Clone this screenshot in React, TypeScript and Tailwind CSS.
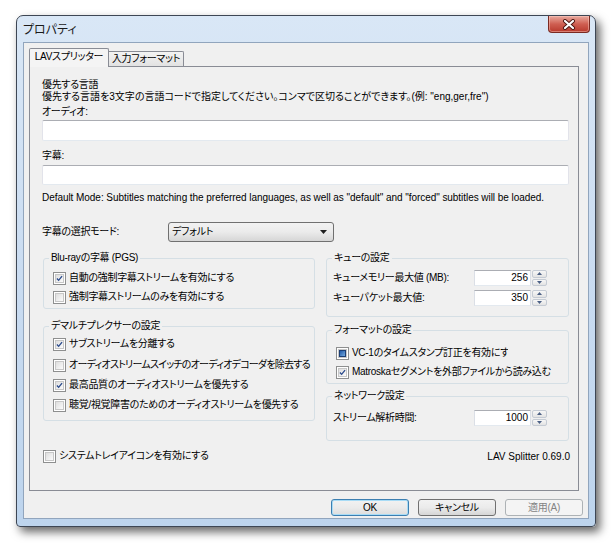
import React from 'react';

type CheckState = 'on' | 'off' | 'mixed';

const CheckBox: React.FC<{ state: CheckState }> = ({ state }) => (
  <span className="flex h-[13px] w-[13px] shrink-0 items-center justify-center border border-[#8e8f8f] bg-white p-[1px]">
    <span className="flex h-full w-full items-center justify-center border border-[#c7c7c7] bg-gradient-to-br from-[#dedede] to-[#fbfbfb]">
      {state === 'on' && (
        <svg width="9" height="9" viewBox="0 0 9 9">
          <path d="M1.2 4.6 L3.4 6.9 L7.8 1.4" fill="none" stroke="#2a4a8c" strokeWidth="1.7" />
        </svg>
      )}
      {state === 'mixed' && <span className="h-[7px] w-[7px] border border-[#1d3f74] bg-gradient-to-br from-[#1f5aa8] to-[#76a9dc]" />}
    </span>
  </span>
);

const CheckRow: React.FC<{ state: CheckState; label: string; className?: string; labelClass?: string }> = ({
  state,
  label,
  className,
  labelClass
}) => (
  <div className={`flex h-[14px] items-center gap-[3px] ${className ?? ''}`}>
    <CheckBox state={state} />
    <span className={`whitespace-nowrap leading-[14px] ${labelClass ?? ''}`}>{label}</span>
  </div>
);

const GroupBox: React.FC<{ title: string; className: string; children?: React.ReactNode }> = ({ title, className, children }) => (
  <div className={`flex flex-col rounded-[3px] border border-[#d5dfe5] ${className}`}>
    <span className="-mt-[7px] ml-[5px] w-fit bg-[#f0f0f0] px-[2px] leading-[12px]">{title}</span>
    {children}
  </div>
);

const SpinBox: React.FC<{ value: string }> = ({ value }) => (
  <div className="flex h-[16px] w-[73px] items-stretch gap-[1px] tracking-normal">
    <div className="flex flex-1 items-center justify-end border border-[#abadb3] border-b-[#e3e9ef] border-x-[#dbdfe6] bg-white pr-[2px] leading-[14px]">
      {value}
    </div>
    <div className="flex w-[15px] flex-col gap-[1px]">
      <div className="flex flex-1 items-center justify-center rounded-[2px] border border-[#c5cbd4] bg-gradient-to-b from-[#f7f7f7] to-[#e3e3e3]">
        <svg width="5" height="3" viewBox="0 0 5 3"><path d="M0 3 L2.5 0 L5 3 Z" fill="#4d6185" /></svg>
      </div>
      <div className="flex flex-1 items-center justify-center rounded-[2px] border border-[#c5cbd4] bg-gradient-to-b from-[#f7f7f7] to-[#e3e3e3]">
        <svg width="5" height="3" viewBox="0 0 5 3"><path d="M0 0 L5 0 L2.5 3 Z" fill="#4d6185" /></svg>
      </div>
    </div>
  </div>
);

const TextBox: React.FC<{ className: string }> = ({ className }) => (
  <div className={`w-[527px] rounded-[2px] border border-[#abadb3] border-x-[#e2e3ea] border-b-[#e3e9ef] bg-white ${className}`} />
);

export default function App() {
  return (
    <div className="h-[548px] w-[614px] overflow-hidden bg-white pl-[16px] pt-[15px] font-['Liberation_Sans','Noto_Sans_CJK_JP',sans-serif] text-[10px] tracking-[-0.3px] text-black [font-feature-settings:'palt']">
      <div className="flex h-[512px] w-[580px] flex-col rounded-t-[7px] rounded-b-[4px] border border-[#3d4654] bg-gradient-to-b from-[#d9e7f6] via-[#cadcf1] to-[#bdd4ed] shadow-[4px_5px_10px_rgba(0,0,0,0.6)]">
        <div className="flex h-[26px] shrink-0 items-start justify-between pl-[6px] pr-[5px]">
          <span className="mt-[7px] text-[12px] leading-[14px] tracking-normal text-[#1a1a1a]">プロパティ</span>
          <div className="flex h-[17px] w-[42px] items-center justify-center rounded-b-[4px] border border-t-0 border-[#7a2a22] bg-gradient-to-b from-[#e8a99f] via-[#cf5f52] to-[#b8382c] shadow-[inset_0_0_0_1px_rgba(255,210,200,0.45)]">
            <svg width="14" height="11" viewBox="0 0 14 11">
              <path d="M3 2 L11 9 M11 2 L3 9" stroke="#4a1410" strokeWidth="4" strokeLinecap="round" />
              <path d="M3 2 L11 9 M11 2 L3 9" stroke="#ffffff" strokeWidth="2.2" strokeLinecap="round" />
            </svg>
          </div>
        </div>

        <div className="mx-[6px] mb-[7px] flex flex-1 flex-col border border-[#91a5bd] bg-[#f0f0f0] px-[5px] pt-[5px]">
          <div className="flex h-[18px] items-end">
            <div className="relative z-10 -mb-[1px] flex h-[19px] w-[80px] items-start justify-center rounded-t-[2px] border border-b-0 border-[#898c95] bg-[#f4f4f4] pt-[2px] leading-[12px]">
              LAVスプリッター
            </div>
            <div className="flex h-[15px] w-[75px] items-start justify-center rounded-tr-[2px] border border-b-0 border-l-0 border-[#898c95] bg-gradient-to-b from-[#f3f3f3] to-[#e2e2e2] pt-[1px] leading-[12px]">
              入力フォーマット
            </div>
          </div>

          <div className="flex h-[425px] w-[550px] flex-col border border-[#898c95] bg-[#f0f0f0] pl-[12px] pr-[8px] pt-[12px]">
            <div className="leading-[12px]">優先する言語</div>
            <div className="leading-[12px] tracking-normal">優先する言語を3文字の言語コードで指定してください。コンマで区切ることができます。(例: "eng,ger,fre")</div>
            <div className="mt-[3px] leading-[12px]">オーディオ:</div>
            <TextBox className="mt-[2px] h-[21px]" />
            <div className="mt-[9px] leading-[12px]">字幕:</div>
            <TextBox className="mt-[3px] h-[20px]" />
            <div className="mt-[7px] leading-[12px] tracking-[-0.05px]">Default Mode: Subtitles matching the preferred languages, as well as "default" and "forced" subtitles will be loaded.</div>

            <div className="mt-[18px] flex h-[20px] items-center">
              <span className="w-[126px] leading-[12px]">字幕の選択モード:</span>
              <div className="flex h-[20px] w-[166px] items-center justify-between rounded-[3px] border border-[#707070] bg-gradient-to-b from-[#f2f2f2] via-[#ebebeb] to-[#d6d6d6] pl-[3px] pr-[6px]">
                <span className="leading-[12px]">デフォルト</span>
                <svg width="7" height="4" viewBox="0 0 7 4"><path d="M0 0 L7 0 L3.5 4 Z" fill="#1e1e1e" /></svg>
              </div>
            </div>

            <div className="mt-[16px] ml-[1px] flex gap-[11px]">
              <div className="flex w-[272px] flex-col">
                <GroupBox title="Blu-rayの字幕 (PGS)" className="h-[51px]">
                  <CheckRow state="on" label="自動の強制字幕ストリームを有効にする" className="ml-[9px] mt-[7px]" />
                  <CheckRow state="off" label="強制字幕ストリームのみを有効にする" className="ml-[9px] mt-[5px]" />
                </GroupBox>
                <GroupBox title="デマルチプレクサーの設定" className="mt-[17px] h-[95px]">
                  <CheckRow state="on" label="サブストリームを分離する" className="ml-[9px] mt-[5px]" />
                  <CheckRow
                    state="off"
                    label="オーディオストリームスイッチのオーディオデコーダを除去する"
                    className="ml-[9px] mt-[7px]"
                    labelClass="tracking-[-0.75px]"
                  />
                  <CheckRow state="on" label="最高品質のオーディオストリームを優先する" className="ml-[9px] mt-[6px]" />
                  <CheckRow state="off" label="聴覚/視覚障害のためのオーディオストリームを優先する" className="ml-[9px] mt-[6px]" />
                </GroupBox>
              </div>

              <div className="flex w-[243px] flex-col">
                <GroupBox title="キューの設定" className="h-[59px]">
                  <div className="ml-[6px] mt-[6px] flex items-center justify-between pr-[21px]">
                    <span className="leading-[12px]">キューメモリー最大値 (MB):</span>
                    <SpinBox value="256" />
                  </div>
                  <div className="ml-[6px] mt-[4px] flex items-center justify-between pr-[21px]">
                    <span className="leading-[12px]">キューパケット最大値:</span>
                    <SpinBox value="350" />
                  </div>
                </GroupBox>
                <GroupBox title="フォーマットの設定" className="mt-[13px] h-[54px]">
                  <div className="ml-[9px] mt-[10px] w-[172px] overflow-hidden">
                    <CheckRow state="mixed" label="VC-1のタイムスタンプ訂正を有効にする" />
                  </div>
                  <CheckRow state="on" label="Matroskaセグメントを外部ファイルから読み込む" className="ml-[9px] mt-[5px]" />
                </GroupBox>
                <GroupBox title="ネットワーク設定" className="mt-[12px] h-[45px]">
                  <div className="ml-[6px] mt-[8px] flex items-center justify-between pr-[21px]">
                    <span className="leading-[12px]">ストリーム解析時間:</span>
                    <SpinBox value="1000" />
                  </div>
                </GroupBox>
              </div>
            </div>

            <div className="mt-[8px] flex items-end justify-between">
              <CheckRow state="off" label="システムトレイアイコンを有効にする" className="ml-[1px]" />
              <span className="leading-[12px] tracking-normal">LAV Splitter 0.69.0</span>
            </div>
          </div>

          <div className="mt-[8px] flex justify-end gap-[9px]">
            <div className="flex h-[17px] w-[78px] items-center justify-center rounded-[3px] border border-[#3c7fb1] bg-gradient-to-b from-[#f2f2f2] via-[#ebebeb] to-[#dddddd] shadow-[inset_0_0_0_1px_#a9dcf6] leading-[12px]">
              OK
            </div>
            <div className="flex h-[17px] w-[78px] items-center justify-center rounded-[3px] border border-[#707070] bg-gradient-to-b from-[#f2f2f2] via-[#ebebeb] to-[#d6d6d6] leading-[12px]">
              キャンセル
            </div>
            <div className="flex h-[17px] w-[78px] items-center justify-center rounded-[3px] border border-[#adb2b5] bg-[#f4f4f4] leading-[12px] text-[#838383]">
              適用(A)
            </div>
          </div>
        </div>
      </div>
    </div>
  );
}
